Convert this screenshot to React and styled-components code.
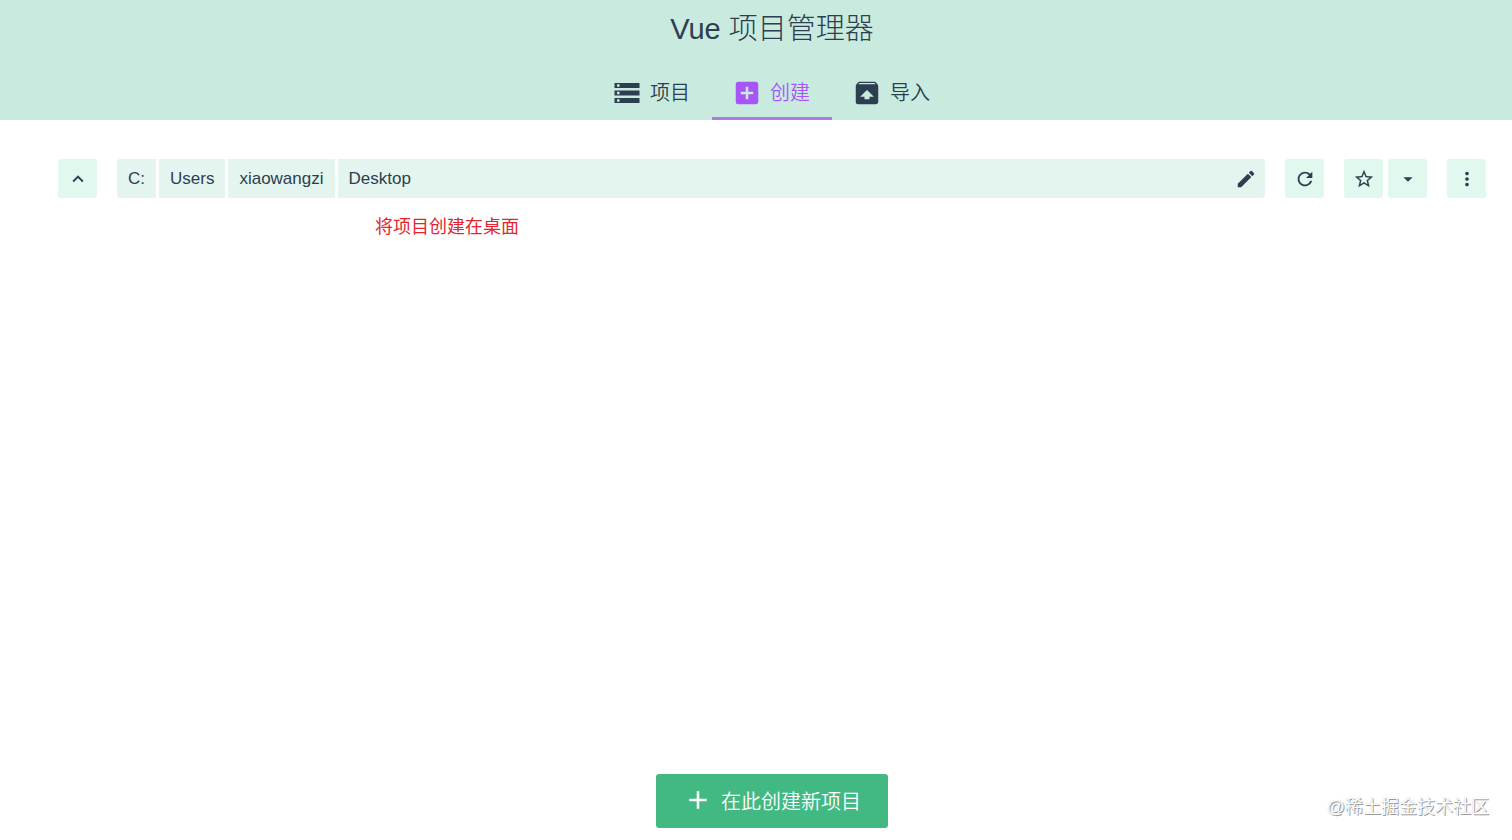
import React from 'react';
import styled, { createGlobalStyle } from 'styled-components';
import {
  MdStorage, MdAddBox, MdUnarchive, MdKeyboardArrowUp, MdEdit, MdRefresh,
  MdStarBorder, MdArrowDropDown, MdMoreVert, MdAdd,
} from 'react-icons/md';

const GlobalStyle = createGlobalStyle`
  * { box-sizing: border-box; }
  body {
    margin: 0;
    background: #fff;
    color: #2c3e50;
    font-family: "Liberation Sans", "Noto Sans CJK SC", sans-serif;
  }
  button { font: inherit; color: inherit; border: 0; cursor: pointer; }
  svg { display: block; flex: none; }
`;

const Page = styled.div`
  position: relative;
  min-height: 100vh;
  display: flex;
  flex-direction: column;
`;

const Header = styled.header`
  height: 120px;
  padding-left: 32px;
  background: #c9ebdf;
  display: flex;
  flex-direction: column;
  align-items: center;
  justify-content: space-between;
`;

const Title = styled.h1`
  margin: 0;
  font-size: 29px;
  line-height: 58px;
  font-weight: 300;
`;

const Tabs = styled.nav`
  display: flex;
`;

const Tab = styled.a`
  display: flex;
  align-items: center;
  gap: 8px;
  width: 120px;
  height: 56px;
  padding: 4px 20px 0;
  border-bottom: 3px solid ${(p) => (p.$active ? '#ab7ae0' : 'transparent')};
  color: ${(p) => (p.$active ? '#a855f7' : '#2c3e50')};
  font-size: 20px;
  font-weight: 350;
  line-height: 30px;
  white-space: nowrap;
  text-decoration: none;
`;

const Main = styled.main`
  flex: 1;
  padding: 39px 26px 0 58px;
`;

const Toolbar = styled.div`
  display: flex;
  gap: 20px;
`;

const ButtonPair = styled.div`
  display: flex;
  gap: 5px;
`;

const IconButton = styled.button`
  width: 39px;
  height: 39px;
  padding: 0;
  display: grid;
  place-items: center;
  border-radius: 3px;
  background: #e0f8ed;
`;

const PathBar = styled.div`
  flex: 1;
  display: flex;
  gap: 3px;
  border-radius: 3px;
  overflow: hidden;
`;

const Folder = styled.button`
  height: 39px;
  padding: 0 11px;
  background: #e4f5ef;
  font-size: 17px;
  line-height: 39px;
`;

const CurrentFolder = styled.div`
  flex: 1;
  display: flex;
  justify-content: space-between;
  background: #e4f5ef;
`;

const EditButton = styled(IconButton)`
  background: none;
`;

const Note = styled.p`
  margin: 16px 0 0 317px;
  color: #e3262c;
  font-size: 18px;
  line-height: 26px;
`;

const Footer = styled.footer`
  display: flex;
  justify-content: center;
  padding: 0 0 12px 32px;
`;

const CreateButton = styled.button`
  height: 54px;
  padding: 0 27px 2px;
  display: flex;
  align-items: center;
  gap: 8px;
  border-radius: 3px;
  background: #42b983;
  && {
    color: #fff;
    font-size: 20px;
    font-weight: 350;
  }
`;

const Watermark = styled.span`
  position: absolute;
  right: 23px;
  bottom: 20px;
  color: #fff;
  font-size: 18px;
  font-weight: 350;
  line-height: 26px;
  text-shadow: 1px 1px 0 #999, 0 0 1px #bbb;
`;

const tabs = [
  { label: '项目', Icon: MdStorage },
  { label: '创建', Icon: MdAddBox, active: true },
  { label: '导入', Icon: MdUnarchive },
];

const parents = ['C:', 'Users', 'xiaowangzi'];

export default function App() {
  return (
    <Page>
      <GlobalStyle />
      <Header>
        <Title>Vue 项目管理器</Title>
        <Tabs>
          {tabs.map(({ label, Icon, active }) => (
            <Tab key={label} href="#" $active={active}>
              <Icon size={30} />
              {label}
            </Tab>
          ))}
        </Tabs>
      </Header>
      <Main>
        <Toolbar>
          <IconButton aria-label="上级目录"><MdKeyboardArrowUp size={22} /></IconButton>
          <PathBar>
            {parents.map((name) => <Folder key={name}>{name}</Folder>)}
            <CurrentFolder>
              <Folder>Desktop</Folder>
              <EditButton aria-label="编辑路径"><MdEdit size={22} /></EditButton>
            </CurrentFolder>
          </PathBar>
          <IconButton aria-label="刷新"><MdRefresh size={22} /></IconButton>
          <ButtonPair>
            <IconButton aria-label="收藏"><MdStarBorder size={22} /></IconButton>
            <IconButton aria-label="收藏列表"><MdArrowDropDown size={22} /></IconButton>
          </ButtonPair>
          <IconButton aria-label="更多"><MdMoreVert size={22} /></IconButton>
        </Toolbar>
        <Note>将项目创建在桌面</Note>
      </Main>
      <Footer>
        <CreateButton>
          <MdAdd size={30} />
          在此创建新项目
        </CreateButton>
      </Footer>
      <Watermark>@稀土掘金技术社区</Watermark>
    </Page>
  );
}
